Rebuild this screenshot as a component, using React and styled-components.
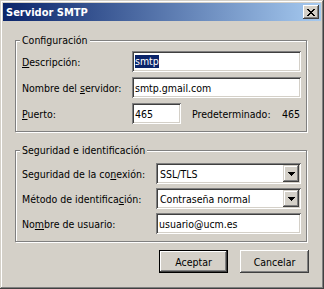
import React from 'react';
import styled, { createGlobalStyle } from 'styled-components';

const Global = createGlobalStyle`
  html, body { margin: 0; padding: 0; background: #d4d0c8; }
  body {
    font-family: "DejaVu Sans Condensed", "DejaVu Sans", sans-serif;
    font-size: 10.5px;
    color: #000;
  }
`;

const Window = styled.div`
  box-sizing: border-box;
  width: 324px;
  height: 289px;
  padding: 3px;
  background: #d4d0c8;
  box-shadow: inset -1px -1px #404040, inset 1px 1px #d4d0c8,
    inset -2px -2px #808080, inset 2px 2px #ffffff;
  display: flex;
  flex-direction: column;
`;

const TitleBar = styled.div`
  height: 18px;
  display: flex;
  align-items: center;
  justify-content: space-between;
  padding: 0 2px 0 3px;
  background: linear-gradient(to right, #0a246a, #a6caf0);
`;

const TitleText = styled.span`
  color: #fff;
  font-weight: bold;
  font-size: 11px;
`;

const CloseButton = styled.div`
  box-sizing: border-box;
  width: 16px;
  height: 14px;
  background: #d4d0c8;
  box-shadow: inset -1px -1px #404040, inset 1px 1px #ffffff,
    inset -2px -2px #808080;
  display: flex;
  align-items: center;
  justify-content: center;
`;

const Body = styled.div`
  display: flex;
  flex-direction: column;
  padding: 19px 0 0 12px;
`;

const Group = styled.div`
  position: relative;
  box-sizing: border-box;
  width: 292px;
  margin-top: ${(p) => p.$mt || 0}px;
  border: 1px solid #808080;
  box-shadow: inset 1px 1px #ffffff, 1px 1px #ffffff;
  padding: ${(p) => p.$pt}px 5px 7px 6px;
  display: flex;
  flex-direction: column;
  gap: ${(p) => p.$gap}px;
`;

const Legend = styled.span`
  position: absolute;
  top: -7px;
  left: 4px;
  padding: 0 2px;
  background: #d4d0c8;
  line-height: 13px;
`;

const Row = styled.div`
  display: grid;
  grid-template-columns: ${(p) => p.$label}px 1fr;
  align-items: center;
  height: 21px;
`;

const Label = styled.span`
  white-space: nowrap;
`;

const sunken = `
  box-sizing: border-box;
  height: 21px;
  background: #fff;
  box-shadow: inset 1px 1px #808080, inset -1px -1px #ffffff,
    inset 2px 2px #404040, inset -2px -2px #d4d0c8;
`;

const Input = styled.div`
  ${sunken}
  width: ${(p) => (p.$w ? `${p.$w}px` : 'auto')};
  padding: 0 3px;
  display: flex;
  align-items: center;
  white-space: nowrap;
`;

const Selected = styled.span`
  background: #0a246a;
  color: #fff;
  line-height: 13px;
`;

const PortLine = styled.div`
  display: flex;
  align-items: center;
`;

const DefaultLabel = styled.span`
  margin-left: 11px;
  flex: 1;
`;

const DefaultValue = styled.span`
  padding-right: 1px;
`;

const Select = styled.div`
  ${sunken}
  padding: 2px 2px 2px 4px;
  display: flex;
  align-items: center;
  justify-content: space-between;
`;

const DropButton = styled.div`
  box-sizing: border-box;
  width: 16px;
  height: 17px;
  background: #d4d0c8;
  box-shadow: inset -1px -1px #404040, inset 1px 1px #d4d0c8,
    inset -2px -2px #808080, inset 2px 2px #ffffff;
  display: flex;
  align-items: center;
  justify-content: center;
`;

const Buttons = styled.div`
  display: flex;
  justify-content: flex-end;
  gap: 12px;
  width: 294px;
  margin-top: 8px;
`;

const Button = styled.div`
  box-sizing: border-box;
  width: 69px;
  height: 23px;
  display: flex;
  align-items: center;
  justify-content: center;
  background: #d4d0c8;
  box-shadow: ${(p) =>
    p.$default
      ? 'inset -1px -1px #000, inset 1px 1px #000, inset -2px -2px #404040, inset 2px 2px #fff, inset -3px -3px #808080'
      : 'inset -1px -1px #404040, inset 1px 1px #fff, inset -2px -2px #808080'};
`;

const Arrow = () => (
  <svg width="7" height="4" viewBox="0 0 7 4">
    <path d="M0 0h7v1H0zM1 1h5v1H1zM2 2h3v1H2zM3 3h1v1H3z" fill="#000" />
  </svg>
);

const CloseIcon = () => (
  <svg width="8" height="7" viewBox="0 0 8 7" shapeRendering="crispEdges">
    <path
      d="M0 0h2v1H0zM6 0h2v1H6zM1 1h2v1H1zM5 1h2v1H5zM2 2h4v1H2zM3 3h2v1H3zM2 4h4v1H2zM1 5h2v1H1zM5 5h2v1H5zM0 6h2v1H0zM6 6h2v1H6z"
      fill="#000"
    />
  </svg>
);

export default function App() {
  return (
    <>
      <Global />
      <Window>
        <TitleBar>
          <TitleText>Servidor SMTP</TitleText>
          <CloseButton>
            <CloseIcon />
          </CloseButton>
        </TitleBar>
        <Body>
          <Group $pt={10} $gap={5}>
            <Legend>Configuración</Legend>
            <Row $label={110}>
              <Label>
                <u>D</u>escripción:
              </Label>
              <Input>
                <Selected>smtp</Selected>
              </Input>
            </Row>
            <Row $label={110}>
              <Label>
                Nombre del <u>s</u>ervidor:
              </Label>
              <Input>smtp.gmail.com</Input>
            </Row>
            <Row $label={110}>
              <Label>
                <u>P</u>uerto:
              </Label>
              <PortLine>
                <Input $w={49}>465</Input>
                <DefaultLabel>Predeterminado:</DefaultLabel>
                <DefaultValue>465</DefaultValue>
              </PortLine>
            </Row>
          </Group>
          <Group $mt={18} $pt={12} $gap={4}>
            <Legend>Seguridad e identificación</Legend>
            <Row $label={134}>
              <Label>
                Seguridad de la co<u>n</u>exión:
              </Label>
              <Select>
                <span>SSL/TLS</span>
                <DropButton>
                  <Arrow />
                </DropButton>
              </Select>
            </Row>
            <Row $label={134}>
              <Label>
                Método de identifica<u>c</u>ión:
              </Label>
              <Select>
                <span>Contraseña normal</span>
                <DropButton>
                  <Arrow />
                </DropButton>
              </Select>
            </Row>
            <Row $label={134}>
              <Label>
                No<u>m</u>bre de usuario:
              </Label>
              <Input>usuario@ucm.es</Input>
            </Row>
          </Group>
          <Buttons>
            <Button $default>Aceptar</Button>
            <Button>Cancelar</Button>
          </Buttons>
        </Body>
      </Window>
    </>
  );
}
